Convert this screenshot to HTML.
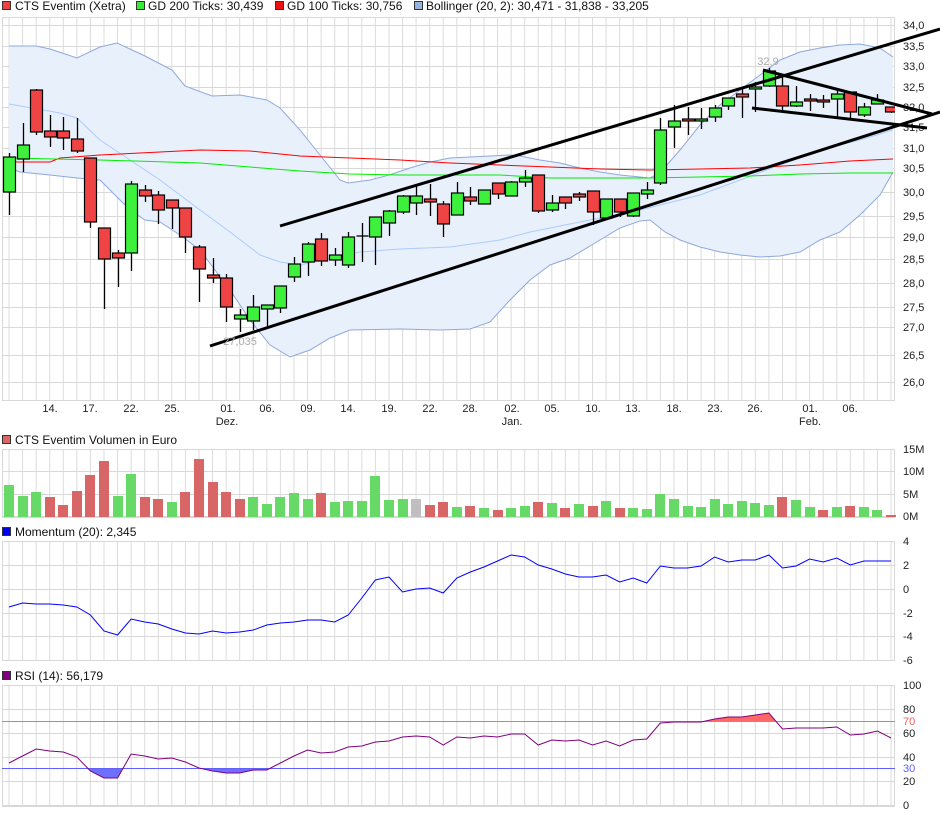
<!DOCTYPE html>
<html><head><meta charset="utf-8">
<style>
html,body{margin:0;padding:0;background:#fff;width:940px;height:814px;overflow:hidden}
svg{display:block}
text{font-family:"Liberation Sans",sans-serif;font-size:11px;fill:#222}
.lg{font-size:12px;fill:#111}
</style></head><body>
<svg id="s" width="940" height="814" viewBox="0 0 940 814" xmlns="http://www.w3.org/2000/svg">
<defs>
<clipPath id="cm"><rect x="2" y="17" width="893" height="384"/></clipPath>
<clipPath id="below30"><rect x="2" y="768" width="893" height="40"/></clipPath>
<clipPath id="above70"><rect x="2" y="685" width="893" height="36"/></clipPath>
</defs>
<g id="grid"></g>
<g id="main" clip-path="url(#cm)"></g>
<g id="lower"></g>
<!-- legend -->
<rect x="2.5" y="1.5" width="8" height="8" fill="#f04040" stroke="#333"/>
<text class="lg" x="15" y="10">CTS Eventim (Xetra)</text>
<rect x="136.5" y="1.5" width="8" height="8" fill="#33ee33" stroke="#333"/>
<text class="lg" x="148" y="10">GD 200 Ticks: 30,439</text>
<rect x="275.5" y="1.5" width="8" height="8" fill="#ee1111" stroke="#333"/>
<text class="lg" x="287" y="10">GD 100 Ticks: 30,756</text>
<rect x="414.5" y="1.5" width="8" height="8" fill="#99b3e0" stroke="#333"/>
<text class="lg" x="426" y="10">Bollinger (20, 2): 30,471 - 31,838 - 33,205</text>
<!-- main y axis -->
<g>
<text x="903" y="29">34,0</text><text x="903" y="50">33,5</text><text x="903" y="70">33,0</text>
<text x="903" y="91">32,5</text><text x="903" y="111">32,0</text><text x="903" y="131">31,5</text>
<text x="903" y="152">31,0</text><text x="903" y="172">30,5</text><text x="903" y="196">30,0</text>
<text x="903" y="220">29,5</text><text x="903" y="241">29,0</text><text x="903" y="263">28,5</text>
<text x="903" y="287">28,0</text><text x="903" y="311">27,5</text><text x="903" y="331">27,0</text>
<text x="903" y="359">26,5</text><text x="903" y="386">26,0</text>
</g>
<g id="trend"></g>
<!-- x labels -->
<g text-anchor="middle">
<text x="50" y="412">14.</text><text x="90" y="412">17.</text><text x="131" y="412">22.</text>
<text x="172" y="412">25.</text><text x="228" y="412">01.</text><text x="267" y="412">06.</text>
<text x="308" y="412">09.</text><text x="348" y="412">14.</text><text x="389" y="412">19.</text>
<text x="430" y="412">22.</text><text x="470" y="412">28.</text><text x="512" y="412">02.</text>
<text x="552" y="412">05.</text><text x="593" y="412">10.</text><text x="633" y="412">13.</text>
<text x="674" y="412">18.</text><text x="715" y="412">23.</text><text x="755" y="412">26.</text>
<text x="810" y="412">01.</text><text x="850" y="412">06.</text>
<text x="227" y="425">Dez.</text><text x="512" y="425">Jan.</text><text x="810" y="425">Feb.</text>
</g>
<text x="768" y="65" text-anchor="middle" style="fill:#aaa">32,9</text>
<text x="240" y="345" text-anchor="middle" style="fill:#aaa">27,035</text>
<!-- volume -->
<rect x="2.5" y="435.5" width="8" height="8" fill="#d96666" stroke="#333"/>
<text class="lg" x="15" y="444">CTS Eventim Volumen in Euro</text>
<text x="903" y="453">15M</text><text x="903" y="475">10M</text><text x="903" y="498">5M</text><text x="903" y="520">0M</text>
<!-- momentum -->
<rect x="2.5" y="527.5" width="8" height="8" fill="#0000ee" stroke="#333"/>
<text class="lg" x="15" y="536">Momentum (20): 2,345</text>
<text x="903" y="545">4</text><text x="903" y="569">2</text><text x="903" y="593">0</text>
<text x="903" y="617">-2</text><text x="903" y="640">-4</text><text x="903" y="664">-6</text>
<!-- rsi -->
<rect x="2.5" y="671.5" width="8" height="8" fill="#800080" stroke="#333"/>
<text class="lg" x="15" y="680">RSI (14): 56,179</text>
<text x="903" y="689">100</text><text x="903" y="713">80</text><text x="903" y="725" style="fill:#f06060">70</text>
<text x="903" y="737">60</text><text x="903" y="761">40</text><text x="903" y="772" style="fill:#6060ff">30</text>
<text x="903" y="785">20</text><text x="903" y="809">0</text>
</svg>
<script>
const NS="http://www.w3.org/2000/svg";
function el(p,t,a){const e=document.createElementNS(NS,t);for(const k in a)e.setAttribute(k,a[k]);p.appendChild(e);return e}
const G=document.getElementById('grid'),M=document.getElementById('main'),L=document.getElementById('lower'),T=document.getElementById('trend');
const X=i=>9+i*13.57;
function panel(y0,y1,hs){
  el(G,'rect',{x:2.5,y:y0+.5,width:892,height:y1-y0,fill:'#fff',stroke:'#d8d8d8'});
  for(let i=0;i<66;i++)el(G,'line',{x1:X(i),x2:X(i),y1:y0,y2:y1,stroke:'#dcdcdc'});
  hs.forEach(h=>el(G,'line',{x1:2,x2:895,y1:h+.5,y2:h+.5,stroke:'#d8d8d8'}));
}
panel(17,400,[25,46,66,87,107,127,148,168,192,216,237,259,283,307,327,355,382]);
panel(449,517,[449,471,494,516]);
panel(541,660,[541,565,589,613,636,660]);
panel(685,806,[685,709,733,757,781,805]);
const P=a=>a.map(p=>p.join(',')).join(' ');
const up=[[9,46],[36,46],[50,49],[77,58],[100,47],[117,43],[145,56],[172,70],[185,86],[212,96],[240,95],[267,100],[280,108],[300,130],[320,155],[340,180],[348,183],[370,180],[389,175],[410,168],[430,162],[450,158],[470,157],[490,156],[510,155],[520,156],[540,160],[560,163],[580,168],[600,172],[620,175],[640,177],[650,178],[660,173],[680,150],[700,125],[720,105],[740,90],[760,75],[780,60],[800,52],[820,48],[840,45],[860,44],[880,48],[893,57]];
const lo=[[9,168],[20,172],[50,175],[77,178],[100,180],[110,190],[130,210],[145,220],[160,222],[180,235],[200,250],[215,270],[230,290],[250,320],[270,345],[290,357],[310,350],[330,338],[350,330],[400,329],[440,330],[470,329],[490,322],[510,300],[530,280],[550,265],[570,258],[600,240],[620,228],[640,221],[650,220],[665,232],[680,240],[700,247],[720,252],[740,255],[760,257],[780,256],[800,252],[820,240],[840,232],[860,215],[880,195],[893,172]];
el(M,'polygon',{points:P(up.concat(lo.slice().reverse())),fill:'#e8f0fc'});
el(M,'polyline',{points:P(up),fill:'none',stroke:'#8fa8dc'});
el(M,'polyline',{points:P(lo),fill:'none',stroke:'#8fa8dc'});
el(M,'polyline',{points:P([[9,104],[60,113],[77,118],[100,140],[130,160],[160,180],[200,210],[230,232],[260,255],[280,262],[300,265],[330,258],[360,252],[400,249],[450,247],[500,240],[530,232],[560,226],[600,218],[640,210],[660,205],[700,195],[740,180],[780,165],[820,150],[860,140],[893,130]]),fill:'none',stroke:'#aaccff'});
el(M,'polyline',{points:P([[9,162],[50,162],[60,158],[100,155],[140,153],[200,150],[250,151],[300,156],[350,158],[400,160],[450,163],[500,165],[550,167],[600,169],[650,170],[700,169],[750,168],[800,165],[850,161],[893,159]]),fill:'none',stroke:'#ff0000'});
el(M,'polyline',{points:P([[9,158],[100,160],[200,163],[250,167],[300,171],[350,174],[400,175],[500,175],[550,178],[600,178],[650,178],[700,177],[750,176],[800,174],[850,173],[893,173]]),fill:'none',stroke:'#00ee00'});
const C=[[157,192,153,215,'g'],[145,159,123,172,'g'],[90,132,89,135,'r'],[131,137,115,147,'r'],[131,138,117,150,'r'],[139,151,118,153,'r'],[158,222,158,228,'r'],[228,259,228,309,'r'],[253,258,250,287,'r'],[184,253,181,271,'g'],[190,196,185,202,'r'],[195,210,191,224,'r'],[200,208,200,229,'r'],[208,237,208,253,'r'],[247,269,245,302,'r'],[275,278,258,283,'r'],[278,307,274,322,'r'],[315,319,309,332,'g'],[307,321,295,330,'g'],[305,309,305,327,'g'],[286,308,286,313,'g'],[264,277,257,282,'g'],[244,262,242,276,'g'],[239,261,233,266,'r'],[255,260,248,266,'g'],[237,265,232,268,'g'],[236,236,223,262,'g'],[217,237,217,265,'g'],[211,223,210,236,'g'],[196,212,195,214,'g'],[196,203,185,215,'g'],[199,202,184,216,'r'],[204,224,201,237,'r'],[193,215,182,215,'g'],[197,201,187,205,'r'],[190,204,190,204,'g'],[183,194,183,199,'r'],[182,196,181,196,'g'],[178,182,170,187,'g'],[175,211,175,213,'r'],[203,210,195,212,'g'],[197,203,197,209,'r'],[194,197,192,201,'r'],[191,212,191,225,'r'],[199,218,199,220,'g'],[199,212,199,217,'r'],[193,216,193,217,'g'],[190,194,182,199,'g'],[130,183,118,185,'g'],[121,127,105,148,'g'],[119,121,107,135,'r'],[119,121,108,129,'g'],[108,117,105,122,'g'],[98,106,98,110,'g'],[94,97,88,118,'r'],[87,89,82,112,'g'],[71,86,68,87,'g'],[86,106,77,110,'r'],[102,106,86,107,'g'],[99,101,94,111,'r'],[100,102,95,108,'r'],[94,99,90,117,'g'],[92,112,92,118,'r'],[107,115,103,117,'g'],[100,104,94,104,'g'],[107,112,107,113,'r']];
C.forEach((c,i)=>{const x=Math.round(X(i))+.5;
  el(M,'line',{x1:x,x2:x,y1:c[2],y2:c[3],stroke:'#000','stroke-width':1.3});
  if(c[1]-c[0]<1)el(M,'line',{x1:x-6,x2:x+6,y1:c[0],y2:c[0],stroke:'#000','stroke-width':1.3});
  else el(M,'rect',{x:x-6,y:c[0],width:12,height:c[1]-c[0],fill:c[4]=='g'?'#3cf03c':'#f04444',stroke:'#000','stroke-width':1.2});
});
[[280,226,940,29],[210,346,940,112],[763,70,932,114],[752,108,927,128]].forEach(l=>el(T,'line',{x1:l[0],y1:l[1],x2:l[2],y2:l[3],stroke:'#000','stroke-width':3}));
const V=[[485,'g'],[496,'g'],[492,'g'],[497,'r'],[505,'r'],[491,'r'],[475,'r'],[461,'r'],[496,'g'],[474,'g'],[497,'r'],[499,'r'],[502,'g'],[492,'r'],[459,'r'],[482,'r'],[492,'r'],[499,'r'],[497,'g'],[504,'g'],[497,'g'],[493,'g'],[499,'g'],[493,'r'],[502,'g'],[501,'g'],[501,'g'],[476,'g'],[500,'g'],[499,'g'],[499,'x'],[505,'r'],[502,'r'],[507,'g'],[506,'r'],[508,'g'],[510,'r'],[508,'g'],[506,'g'],[502,'r'],[503,'g'],[508,'r'],[504,'g'],[506,'r'],[501,'g'],[508,'r'],[508,'g'],[509,'g'],[494,'g'],[499,'g'],[506,'g'],[507,'g'],[499,'g'],[504,'g'],[501,'g'],[503,'g'],[505,'g'],[497,'r'],[500,'g'],[507,'g'],[510,'r'],[507,'g'],[506,'r'],[507,'g'],[510,'g'],[515,'r']];
V.forEach((v,i)=>el(L,'rect',{x:Math.round(X(i))-5,y:v[0],width:10,height:517-v[0],fill:v[1]=='g'?'#66d966':v[1]=='r'?'#d96666':'#bfbfbf'}));
const mo=[607,603,604,604,605,607,615,631,635,619,622,624,629,633,634,631,633,632,630,625,623,622,620,620,622,615,598,580,577,592,589,588,593,578,572,567,561,555,557,565,569,574,577,577,575,582,578,583,566,568,568,566,557,562,560,560,555,568,566,559,562,558,565,561,561,561];
el(L,'polyline',{points:mo.map((y,i)=>X(i)+','+y).join(' '),fill:'none',stroke:'#0000ff'});
const rs=[763,756,749,751,752,757,771,778,778,754,756,759,758,762,768,771,773,773,770,770,763,756,750,753,752,747,746,742,741,737,736,737,745,737,738,736,737,734,734,745,740,741,740,745,741,746,740,739,723,722,722,722,719,717,717,715,713,729,728,728,728,727,735,734,731,738];
const pts=rs.map((y,i)=>X(i)+','+y).join(' ');
el(L,'polygon',{points:X(0)+',768 '+pts+' '+X(65)+',768','fill':'#6f6fff','clip-path':'url(#below30)'});
el(L,'polygon',{points:X(0)+',721 '+pts+' '+X(65)+',721','fill':'#ff6666','clip-path':'url(#above70)'});
el(L,'line',{x1:2,x2:895,y1:721.5,y2:721.5,stroke:'#f07070'});
el(L,'line',{x1:2,x2:895,y1:768.5,y2:768.5,stroke:'#6060ff'});
el(L,'polyline',{points:pts,fill:'none',stroke:'#800080'});
</script>
</body></html>
